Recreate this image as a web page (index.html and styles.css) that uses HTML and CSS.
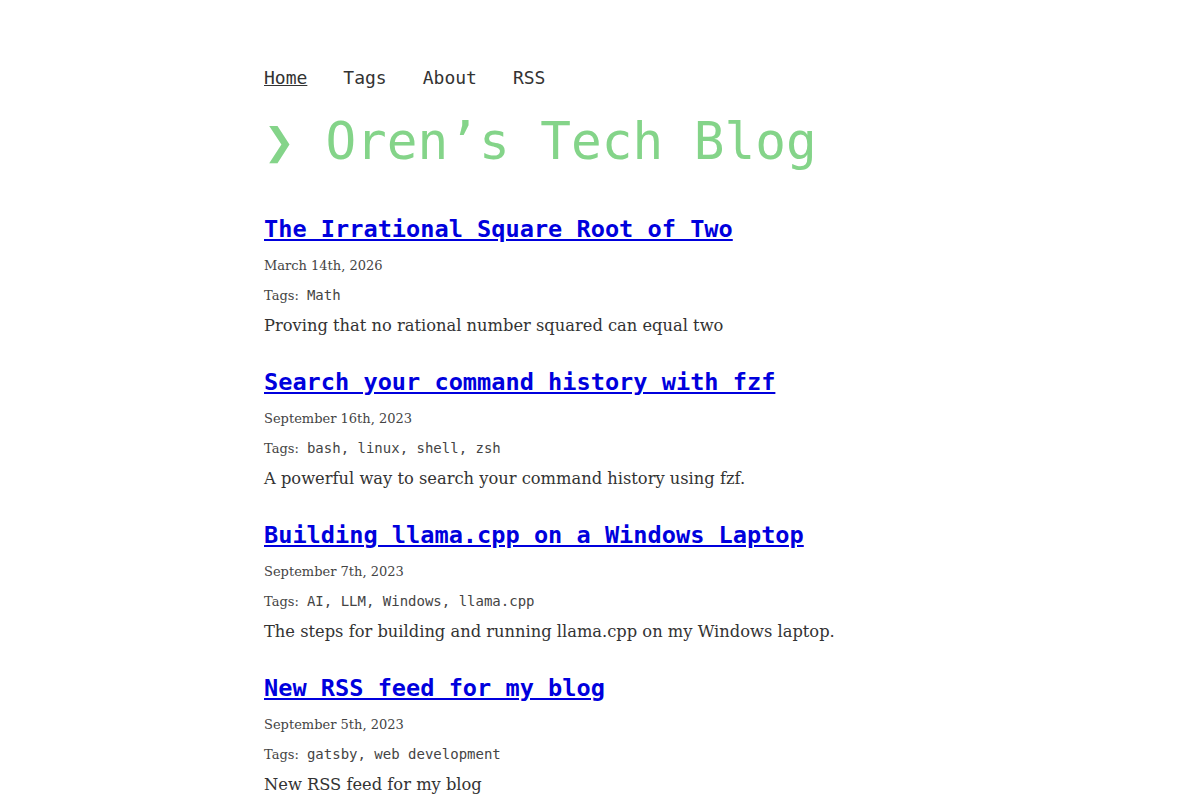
FILE: index.html
```html
<!DOCTYPE html>
<html lang="en">
<head>
  <meta charset="UTF-8" />
  <meta name="viewport" content="width=device-width, initial-scale=1.0"/>
  <title>Oren's Tech Blog</title>
  <link rel="stylesheet" href="styles.css">
</head>
<body>
<div class="container">
  <nav class="nav">
    <a href="#" class="active">Home</a>
    <a href="#">Tags</a>
    <a href="#">About</a>
    <a href="#">RSS</a>
  </nav>

  <h1 class="site-title">❯ Oren’s Tech Blog</h1>

  <div class="posts">
    <div class="post">
      <h2 class="post-title"><a href="#">The Irrational Square Root of Two</a></h2>
      <p class="post-date">March 14th, 2026</p>
      <p class="post-tags">Tags: <code>Math</code></p>
      <p class="post-desc">Proving that no rational number squared can equal two</p>
    </div>

    <div class="post">
      <h2 class="post-title"><a href="#">Search your command history with fzf</a></h2>
      <p class="post-date">September 16th, 2023</p>
      <p class="post-tags">Tags: <code>bash, linux, shell, zsh</code></p>
      <p class="post-desc">A powerful way to search your command history using fzf.</p>
    </div>

    <div class="post">
      <h2 class="post-title"><a href="#">Building llama.cpp on a Windows Laptop</a></h2>
      <p class="post-date">September 7th, 2023</p>
      <p class="post-tags">Tags: <code>AI, LLM, Windows, llama.cpp</code></p>
      <p class="post-desc">The steps for building and running llama.cpp on my Windows laptop.</p>
    </div>

    <div class="post">
      <h2 class="post-title"><a href="#">New RSS feed for my blog</a></h2>
      <p class="post-date">September 5th, 2023</p>
      <p class="post-tags">Tags: <code>gatsby, web development</code></p>
      <p class="post-desc">New RSS feed for my blog</p>
    </div>
  </div>
</div>
</body>
</html>
```

FILE: styles.css
```css
* {
  margin: 0;
  padding: 0;
  box-sizing: border-box;
}

body {
  font-family: "DejaVu Serif", serif;
  color: #333;
  background: #fff;
}

.container {
  max-width: 672px;
  margin: 0 auto;
  padding-top: 63px;
}

.nav {
  display: flex;
  gap: 36px;
  font-family: "DejaVu Sans Mono", monospace;
  font-size: 18px;
  line-height: 30px;
}

.nav a {
  color: #333;
  text-decoration: none;
}

.nav a.active {
  text-decoration: underline;
}

.site-title {
  margin-top: 19px;
  font-family: "DejaVu Sans Mono", monospace;
  font-size: 51px;
  line-height: 60px;
  font-weight: normal;
  color: #84d489;
}

.posts {
  margin-top: 39px;
}

.post {
  margin-bottom: 23px;
}

.post-title {
  font-family: "DejaVu Sans Mono", monospace;
  font-size: 23.6px;
  line-height: 36px;
  height: 36px;
  font-weight: bold;
  margin-bottom: 4px;
}

.post-title a {
  color: #0000dd;
}

.post-date,
.post-tags {
  font-size: 13px;
  line-height: 30px;
  height: 30px;
  color: #444;
}

.post-tags code {
  font-family: "DejaVu Sans Mono", monospace;
  font-size: 14px;
  line-height: 1;
  margin-left: 4px;
}

.post-desc {
  font-size: 16.3px;
  line-height: 30px;
  height: 30px;
  color: #333;
}
```
